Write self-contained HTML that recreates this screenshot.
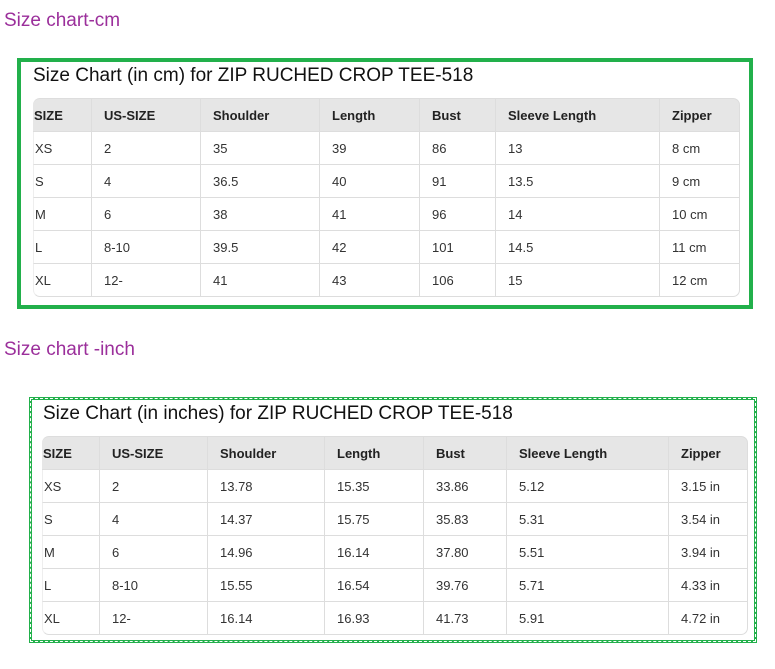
<!DOCTYPE html>
<html><head><meta charset="utf-8"><style>
*{margin:0;padding:0;box-sizing:border-box}
body{width:775px;height:669px;background:#fff;position:relative;overflow:hidden;font-family:"Liberation Sans",sans-serif;color:#222}
.h{position:absolute;left:4px;font-size:19px;color:#9b2f9b;font-weight:normal}
.box{position:absolute;border:4px solid #22b04b}
.box2{position:absolute;border:3px solid #22b04b}
.box2:after{content:"";position:absolute;left:-2px;top:-2px;right:-2px;bottom:-2px;border:1px dashed #fff}
.t{position:absolute;font-size:19px;color:#111;white-space:nowrap}
table{position:absolute;border-collapse:separate;border-spacing:0;font-size:13px;color:#333;table-layout:fixed}
td,th{height:33px;padding:0 0 0 12px;text-align:left;border-right:1px solid #ddd;border-bottom:1px solid #ddd;font-weight:normal;white-space:nowrap}
th{background:#e6e6e6;color:#222;font-weight:bold;height:34px;border-top:1px solid #ddd}
td:first-child,th:first-child{padding-left:1px}
th:first-child{border-top-left-radius:7px}
th:last-child{border-top-right-radius:7px}
tr:last-child td:first-child{border-bottom-left-radius:7px}
tr:last-child td:last-child{border-bottom-right-radius:7px}
td:first-child{border-left:1px solid #eee}
</style></head><body>
<div class="h" style="top:10px">Size chart-cm</div>
<div class="box" style="left:17px;top:58px;width:736px;height:251px"></div>
<div class="t" style="left:33px;top:65px">Size Chart (in cm) for ZIP RUCHED CROP TEE-518</div>
<table style="left:33px;top:98px;width:707px">
<colgroup><col style="width:59px"><col style="width:109px"><col style="width:119px"><col style="width:100px"><col style="width:76px"><col style="width:164px"><col style="width:80px"></colgroup>
<tr><th>SIZE</th><th>US-SIZE</th><th>Shoulder</th><th>Length</th><th>Bust</th><th>Sleeve Length</th><th>Zipper</th></tr>
<tr><td>XS</td><td>2</td><td>35</td><td>39</td><td>86</td><td>13</td><td>8 cm</td></tr>
<tr><td>S</td><td>4</td><td>36.5</td><td>40</td><td>91</td><td>13.5</td><td>9 cm</td></tr>
<tr><td>M</td><td>6</td><td>38</td><td>41</td><td>96</td><td>14</td><td>10 cm</td></tr>
<tr><td>L</td><td>8-10</td><td>39.5</td><td>42</td><td>101</td><td>14.5</td><td>11 cm</td></tr>
<tr><td>XL</td><td>12-</td><td>41</td><td>43</td><td>106</td><td>15</td><td>12 cm</td></tr>
</table>
<div class="h" style="top:339px">Size chart -inch</div>
<div class="box2" style="left:29px;top:397px;width:728px;height:246px"></div>
<div class="t" style="left:43px;top:403px">Size Chart (in inches) for ZIP RUCHED CROP TEE-518</div>
<table style="left:42px;top:436px;width:706px">
<colgroup><col style="width:58px"><col style="width:108px"><col style="width:117px"><col style="width:99px"><col style="width:83px"><col style="width:162px"><col style="width:79px"></colgroup>
<tr><th>SIZE</th><th>US-SIZE</th><th>Shoulder</th><th>Length</th><th>Bust</th><th>Sleeve Length</th><th>Zipper</th></tr>
<tr><td>XS</td><td>2</td><td>13.78</td><td>15.35</td><td>33.86</td><td>5.12</td><td>3.15 in</td></tr>
<tr><td>S</td><td>4</td><td>14.37</td><td>15.75</td><td>35.83</td><td>5.31</td><td>3.54 in</td></tr>
<tr><td>M</td><td>6</td><td>14.96</td><td>16.14</td><td>37.80</td><td>5.51</td><td>3.94 in</td></tr>
<tr><td>L</td><td>8-10</td><td>15.55</td><td>16.54</td><td>39.76</td><td>5.71</td><td>4.33 in</td></tr>
<tr><td>XL</td><td>12-</td><td>16.14</td><td>16.93</td><td>41.73</td><td>5.91</td><td>4.72 in</td></tr>
</table>
</body></html>
